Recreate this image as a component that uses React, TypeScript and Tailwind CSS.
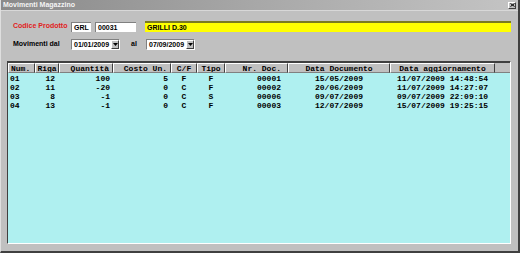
import React from 'react';

const rows = [
  { num: '01', riga: '12', qta: '100', costo: '5', cf: 'F', tipo: 'F', doc: '00001', data: '15/05/2009', agg: '11/07/2009 14:48:54' },
  { num: '02', riga: '11', qta: '-20', costo: '0', cf: 'C', tipo: 'F', doc: '00002', data: '20/06/2009', agg: '11/07/2009 14:27:07' },
  { num: '03', riga: '8', qta: '-1', costo: '0', cf: 'C', tipo: 'S', doc: '00006', data: '09/07/2009', agg: '09/07/2009 22:09:10' },
  { num: '04', riga: '13', qta: '-1', costo: '0', cf: 'C', tipo: 'F', doc: '00003', data: '12/07/2009', agg: '15/07/2009 19:25:15' },
];

const cols = 'grid grid-cols-[27px_24px_54px_58px_26px_28px_63px_102px_105px_1fr]';

function DateCombo({ value }: { value: string }) {
  return (
    <div className="flex h-[11px] w-[49px] bg-white border-t border-l border-t-[#808080] border-l-[#808080] border-b border-r border-b-white border-r-white">
      <span className="flex-1 pl-[2px] text-[7px] leading-[9px] font-bold text-black">{value}</span>
      <div className="w-[8px] h-[9px] bg-[#c0c0c0] border-t border-l border-white border-b border-r border-b-[#404040] border-r-[#404040] flex items-center justify-center">
        <svg width="5" height="3" viewBox="0 0 5 3"><path d="M0 0h5L2.5 3z" fill="#000" /></svg>
      </div>
    </div>
  );
}

export default function App() {
  return (
    <div className="w-[520px] h-[253px] bg-[#c0c0c0] flex flex-col border-r-2 border-b-2 border-r-[#404040] border-b-[#404040] border-l border-l-[#dfdfdf] overflow-hidden" style={{ fontFamily: '"Liberation Sans", Arial, sans-serif' }}>
      <div className="h-[11px] flex items-center justify-between bg-gradient-to-r from-[#8a8a8a] via-[#a8a8a8] to-[#c4c4c4] pl-[2px] pr-[2px] border-b border-[#d8d8d8]">
        <span className="text-[7px] leading-[10px] font-bold text-[#f4f4f4]">Movimenti Magazzino</span>
        <div className="w-[8px] h-[7px] bg-[#c0c0c0] border-t border-l border-white border-b border-r border-b-[#404040] border-r-[#404040] flex items-center justify-center">
          <svg width="5" height="4" viewBox="0 0 5 4"><path d="M0.5 0.5L4.5 3.5M4.5 0.5L0.5 3.5" stroke="#000" strokeWidth="1" /></svg>
        </div>
      </div>

      <div className="flex items-center mt-[10px] h-[11px]">
        <span className="w-[70px] pl-[12px] text-[7px] font-bold text-[#e02020]">Codice Prodotto</span>
        <div className="w-[20px] h-[10px] bg-white border-t border-l border-[#808080] text-[7px] leading-[9px] font-bold pl-[2px]">GRL</div>
        <div className="ml-[4px] w-[41px] h-[10px] bg-white border-t border-l border-[#808080] text-[7px] leading-[9px] font-bold pl-[2px]">00031</div>
        <div className="ml-[9px] w-[366px] h-[11px] bg-[#ffff00] border-t-2 border-[#7a7a20] text-[7px] leading-[9px] font-bold pl-[2px]">GRILLI D.30</div>
      </div>

      <div className="flex items-center mt-[7px] h-[11px]">
        <span className="w-[70px] pl-[12px] text-[7px] font-bold text-black">Movimenti dal</span>
        <DateCombo value="01/01/2009" />
        <span className="w-[26px] pl-[11px] text-[7px] font-bold text-black">al</span>
        <DateCombo value="07/09/2009" />
      </div>

      <div className="mt-[11px] ml-[6px] w-[504px] h-[183px] flex flex-col border-t border-l border-t-[#404040] border-l-[#404040] border-b border-r border-b-white border-r-white bg-[#aff0f0]" style={{ fontFamily: '"Liberation Mono", "Courier New", monospace' }}>
        <div className={`${cols} h-[11px] bg-[#c0c0c0] text-[8px] leading-[9px] font-bold text-black border-t border-[#404040]`}>
          {[
            ['Num.', 'text-left pl-[2px]'],
            ['Riga', 'text-center'],
            ['Quantità', 'text-right pr-[3px]'],
            ['Costo Un.', 'text-right pr-[3px]'],
            ['C/F', 'text-center'],
            ['Tipo', 'text-center'],
            ['Nr. Doc.', 'text-right pr-[6px]'],
            ['Data Documento', 'text-center'],
            ['Data aggiornamento', 'text-center'],
          ].map(([label, cls]) => (
            <div key={label} className={`${cls} border-t border-l border-white border-b border-r border-b-[#808080] border-r-[#404040] whitespace-nowrap overflow-hidden`}>
              {label}
            </div>
          ))}
          <div className="border-b border-[#808080]" />
        </div>
        <div className="flex-1 pt-[1px]">
          {rows.map((r) => (
            <div key={r.num} className={`${cols} h-[9px] text-[8px] leading-[9px] font-bold text-black whitespace-nowrap`}>
              <div className="pl-[2px]">{r.num}</div>
              <div className="text-right pr-[4px]">{r.riga}</div>
              <div className="text-right pr-[3px]">{r.qta}</div>
              <div className="text-right pr-[3px]">{r.costo}</div>
              <div className="text-center">{r.cf}</div>
              <div className="text-center">{r.tipo}</div>
              <div className="text-right pr-[7px]">{r.doc}</div>
              <div className="text-center">{r.data}</div>
              <div className="text-center">{r.agg}</div>
              <div />
            </div>
          ))}
        </div>
      </div>
    </div>
  );
}
